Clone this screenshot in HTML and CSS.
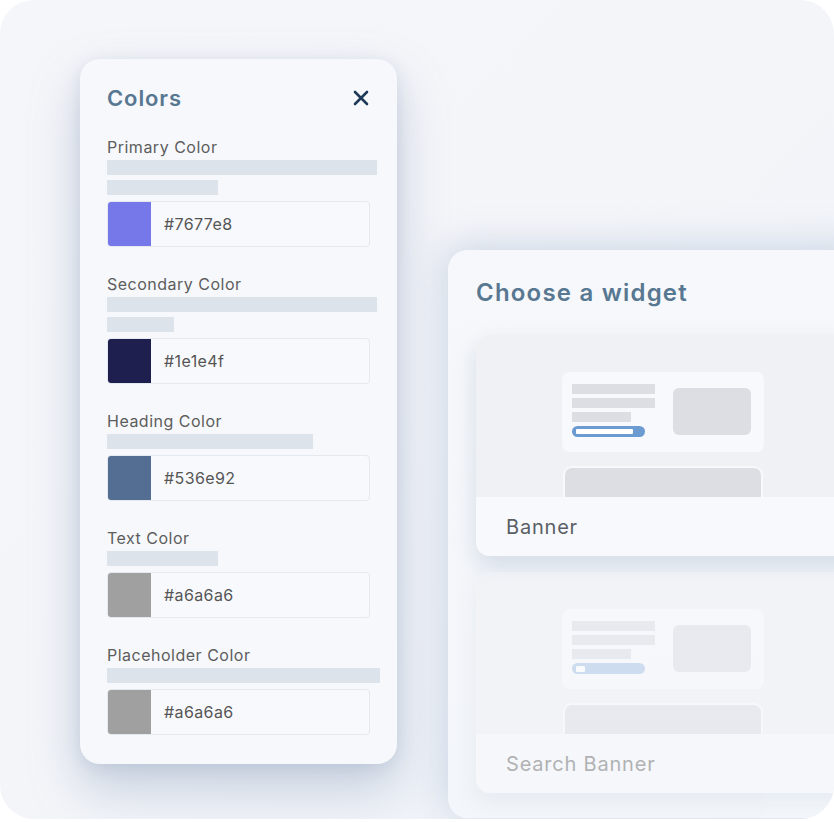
FILE: index.html
```html
<!DOCTYPE html>
<html>
<head>
<meta charset="utf-8">
<link rel="stylesheet" href="styles.css">
</head>
<body>
<div class="stage">
  <section class="colors">
    <div class="colors-head">
      <h2 class="title">Colors</h2>
      <svg class="close" width="16" height="16" viewBox="0 0 16 16"><path d="M2 2L14 14M14 2L2 14" stroke="#1f3a58" stroke-width="2.6" stroke-linecap="round"/></svg>
    </div>

    <div class="field">
      <div class="label">Primary Color</div>
      <div class="bar" style="width:270px"></div>
      <div class="bar second" style="width:111px"></div>
      <div class="input"><span class="swatch" style="background:#7677e8"></span><span class="hex">#7677e8</span></div>
    </div>

    <div class="field">
      <div class="label">Secondary Color</div>
      <div class="bar" style="width:270px"></div>
      <div class="bar second" style="width:67px"></div>
      <div class="input"><span class="swatch" style="background:#1e1e4f"></span><span class="hex">#1e1e4f</span></div>
    </div>

    <div class="field">
      <div class="label">Heading Color</div>
      <div class="bar" style="width:206px"></div>
      <div class="input"><span class="swatch" style="background:#536e92"></span><span class="hex">#536e92</span></div>
    </div>

    <div class="field">
      <div class="label">Text Color</div>
      <div class="bar" style="width:111px"></div>
      <div class="input"><span class="swatch" style="background:#a0a0a0"></span><span class="hex">#a6a6a6</span></div>
    </div>

    <div class="field">
      <div class="label">Placeholder Color</div>
      <div class="bar" style="width:273px"></div>
      <div class="input"><span class="swatch" style="background:#a0a0a0"></span><span class="hex">#a6a6a6</span></div>
    </div>
  </section>

  <section class="widgets">
    <h2 class="title widgets-title">Choose a widget</h2>

    <div class="card">
      <div class="preview">
        <div class="mini">
          <div class="mini-col">
            <div class="line" style="width:83px"></div>
            <div class="line" style="width:83px"></div>
            <div class="line" style="width:59px"></div>
            <div class="pill"><span class="pill-fill"></span></div>
          </div>
          <div class="mini-img"></div>
        </div>
        <div class="mini-bottom"></div>
      </div>
      <div class="card-label">Banner</div>
    </div>

    <div class="card faded">
      <div class="preview">
        <div class="mini">
          <div class="mini-col">
            <div class="line" style="width:83px"></div>
            <div class="line" style="width:83px"></div>
            <div class="line" style="width:59px"></div>
            <div class="pill light"><span class="pill-dot"></span></div>
          </div>
          <div class="mini-img"></div>
        </div>
        <div class="mini-bottom"></div>
      </div>
      <div class="card-label">Search Banner</div>
    </div>
  </section>
</div>
</body>
</html>
```

FILE: styles.css
```css
* { box-sizing: border-box; }

html, body {
  margin: 0;
  padding: 0;
  background: #ffffff;
}

body {
  font-family: "Inter", "Open Sans", "DejaVu Sans", sans-serif;
  color: #5b5b5b;
}

.stage {
  width: 834px;
  height: 819px;
  border-radius: 34px;
  overflow: hidden;
  background: linear-gradient(135deg, #f5f6fa 0%, #f3f5f9 50%, #eef2f8 100%);
  display: flex;
  align-items: flex-start;
  padding: 59px 0 0 80px;
}

.title {
  margin: 0;
  font-size: 22px;
  line-height: 28px;
  font-weight: 600;
  color: #587791;
  letter-spacing: 0.9px;
}

/* Colors panel */
.colors {
  flex-shrink: 0;
  width: 317px;
  height: 705px;
  border-radius: 20px;
  background: #f6f8fb;
  padding: 25px 27px 28px 27px;
  box-shadow: 0 24px 50px rgba(130, 150, 180, 0.4), 0 4px 16px rgba(150, 168, 195, 0.25);
}

.colors-head {
  display: flex;
  align-items: center;
  justify-content: space-between;
  height: 28px;
  margin-bottom: 25px;
}

.close {
  display: block;
  margin-right: 1px;
}

.field + .field {
  margin-top: 27px;
}

.label {
  font-size: 16px;
  line-height: 20px;
  color: #5d5d5d;
  letter-spacing: 0.5px;
  margin-bottom: 3px;
}

.bar {
  height: 15px;
  background: #dde3eb;
}

.bar.second {
  margin-top: 5px;
}

.input {
  margin-top: 6px;
  width: 263px;
  height: 46px;
  display: flex;
  align-items: center;
  border: 1px solid #e4e8ef;
  border-radius: 4px;
  background: #f8f9fc;
  overflow: hidden;
}

.swatch {
  width: 43px;
  height: 100%;
  flex-shrink: 0;
}

.hex {
  margin-left: 13px;
  font-size: 16px;
  color: #555;
  letter-spacing: 0.4px;
}

/* Widgets panel */
.widgets {
  flex-shrink: 0;
  width: 430px;
  height: 568px;
  margin: 191px 0 0 51px;
  border-radius: 20px;
  background: linear-gradient(180deg, #f6f8fb 0%, #f3f6fa 100%);
  padding: 28px 0 0 28px;
  box-shadow: -4px -4px 36px rgba(160, 178, 204, 0.45);
}

.widgets-title {
  font-size: 24px;
  line-height: 30px;
  letter-spacing: 1.2px;
  margin-bottom: 27px;
}

.card {
  width: 400px;
  border-radius: 14px;
  overflow: hidden;
  background: #f8f9fc;
  box-shadow: 0 10px 22px rgba(160, 176, 200, 0.38);
}

.card + .card {
  margin-top: 16px;
}

.card.faded {
  opacity: 0.5;
  box-shadow: 0 8px 20px rgba(160, 176, 200, 0.3);
}

.preview {
  height: 162px;
  background: #eff1f5;
  padding: 37px 0 0 86px;
  overflow: hidden;
}

.mini {
  width: 202px;
  height: 80px;
  border-radius: 8px;
  background: #f8f9fc;
  display: flex;
  padding: 12px 13px 0 10px;
}

.mini-col {
  display: flex;
  flex-direction: column;
  gap: 4px;
}

.line {
  height: 10px;
  background: #dcdee3;
}

.pill {
  width: 73px;
  height: 11px;
  border-radius: 6px;
  background: #6c9bd2;
  display: flex;
  align-items: center;
  padding-left: 4px;
}

.pill-fill {
  width: 57px;
  height: 5px;
  background: #ffffff;
  border-radius: 1px;
}

.pill.light {
  background: #a9c3e6;
}

.pill-dot {
  width: 9px;
  height: 6px;
  background: #ffffff;
  border-radius: 1px;
}

.mini-img {
  margin-left: auto;
  margin-top: 4px;
  width: 78px;
  height: 47px;
  border-radius: 6px;
  background: #dcdee3;
}

.mini-bottom {
  margin: 14px 0 0 1px;
  width: 200px;
  height: 40px;
  border-radius: 9px 9px 0 0;
  background: #dcdee3;
  border: 2px solid #f8f9fc;
}

.card-label {
  height: 59px;
  display: flex;
  align-items: center;
  padding-left: 30px;
  font-size: 20px;
  color: #5a5f66;
  letter-spacing: 0.8px;
  background: #f8f9fc;
}

.card.faded .card-label {
  color: #6f6f6f;
}
```
